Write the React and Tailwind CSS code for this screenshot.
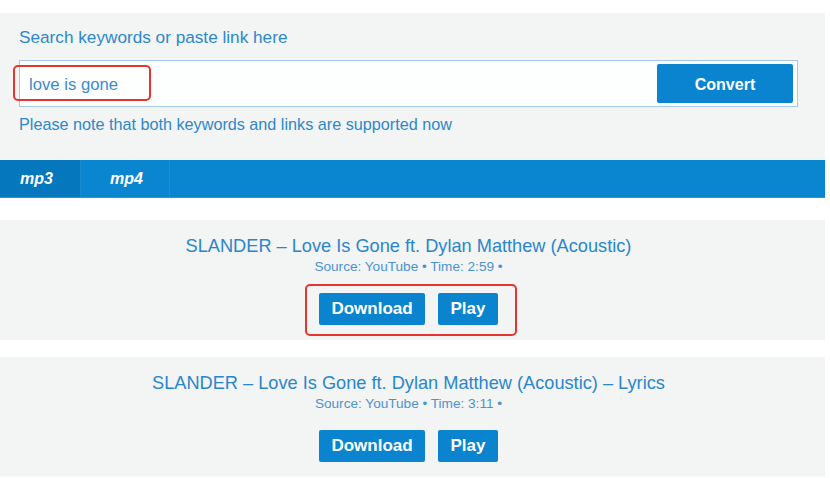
import React from 'react';

const results = [
  { title: 'SLANDER – Love Is Gone ft. Dylan Matthew (Acoustic)', time: '2:59', marked: true },
  { title: 'SLANDER – Love Is Gone ft. Dylan Matthew (Acoustic) – Lyrics', time: '3:11', marked: false },
];

const ResultCard = ({ title, time, marked }) => (
  <div className="w-[825px] h-[120px] bg-[#f3f4f4] flex flex-col items-center pt-[15px] pr-[8px]">
    <div className="text-[18.2px] leading-[22px] text-[#2a86cc]">{title}</div>
    <div className="text-[13.6px] leading-[18px] mt-[1px] text-[#4b93cf]">
      Source: YouTube • Time: {time} •
    </div>
    <div className="relative flex gap-[13px] mt-[17px]">
      <button className="w-[106px] h-[32px] bg-[#0a84cf] text-white text-[17px] font-bold rounded-[2px]">
        Download
      </button>
      <button className="w-[60px] h-[32px] bg-[#0a84cf] text-white text-[17px] font-bold rounded-[2px]">
        Play
      </button>
      {marked && (
        <div className="absolute left-[-14px] top-[-9px] w-[212px] h-[52px] border-2 border-[#e5352f] rounded-[5px]" />
      )}
    </div>
  </div>
);

const App = () => {
  return (
    <div className="w-[830px] h-[478px] bg-white overflow-hidden pt-[13px]" style={{ fontFamily: '"Liberation Sans", Arial, sans-serif' }}>
      <div className="w-[825px] h-[147px] bg-[#f3f4f4] px-[19px] pt-[14px]">
        <div className="text-[17.2px] leading-[20px] text-[#2d88cb]">Search keywords or paste link here</div>
        <div className="relative mt-[13px] w-[779px] h-[47px] border border-[#a7c8e6] bg-[#fdfefe] flex items-center justify-between pl-[9px] pr-[4px]">
          <span className="text-[16.7px] leading-[20px] mt-[2px] text-[#3a8bd0]">love is gone</span>
          <button className="w-[136px] h-[39px] bg-[#0a84cf] text-white text-[16px] font-bold rounded-[2px] pt-[2px]">
            Convert
          </button>
          <div className="absolute left-[-7px] top-[4px] w-[138px] h-[36px] border-2 border-[#e5352f] rounded-[5px]" />
        </div>
        <div className="mt-[7px] text-[16.2px] leading-[20px] text-[#2d88cb]">
          Please note that both keywords and links are supported now
        </div>
      </div>

      <div className="w-[825px] h-[38px] bg-[#0a86d1] flex border-b border-[#2a93d4]">
        <div className="w-[81px] h-full bg-[#0577bd] border-r border-[#1a8ad0] flex items-center pl-[20px] text-white text-[16px] font-bold italic">
          mp3
        </div>
        <div className="w-[89px] h-full border-r border-[#1f8fd4] flex items-center pl-[29px] text-white text-[16px] font-bold italic">
          mp4
        </div>
      </div>

      <div className="mt-[22px]">
        <ResultCard {...results[0]} />
      </div>
      <div className="mt-[17px]">
        <ResultCard {...results[1]} />
      </div>
    </div>
  );
};

export default App;
